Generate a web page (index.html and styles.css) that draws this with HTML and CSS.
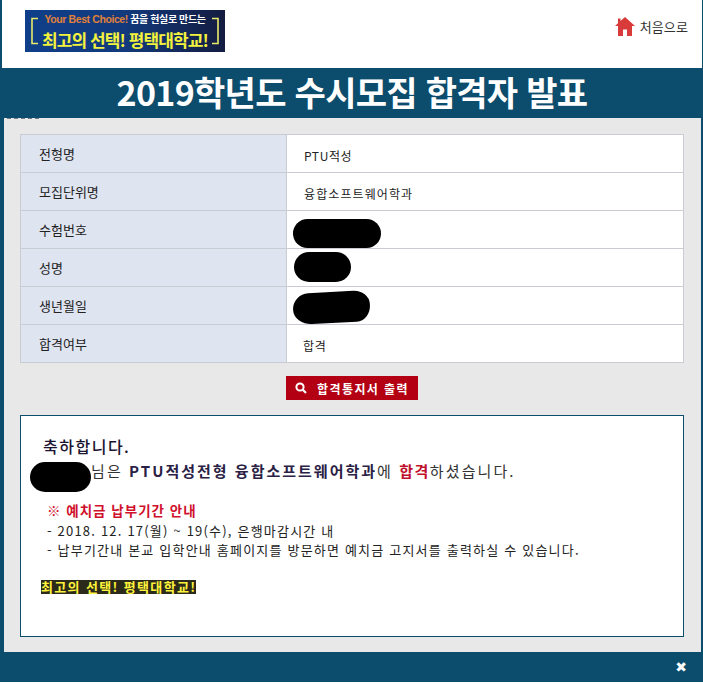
FILE: index.html
```html
<!DOCTYPE html>
<html lang="ko">
<head>
<meta charset="utf-8">
<title>합격자 발표</title>
<link rel="stylesheet" href="styles.css">
</head>
<body>
<div class="frame">
  <header class="top">
    <div class="banner">
      <svg class="bracket" width="9" height="28" viewBox="0 0 9 28"><path d="M8 1.5H2V26.5H8" fill="none" stroke="#e8ea6a" stroke-width="1.6"/></svg>
      <div class="banner-text">
        <div class="banner-small"><span class="orange">Your Best Choice!</span> 꿈을 현실로 만드는</div>
        <div class="banner-big">최고의 선택! 평택대학교!</div>
      </div>
      <svg class="bracket" width="9" height="28" viewBox="0 0 9 28"><path d="M1 1.5H7V26.5H1" fill="none" stroke="#e8ea6a" stroke-width="1.6"/></svg>
    </div>
    <a class="home">
      <svg width="20" height="19" viewBox="0 0 20 19"><path fill="#d93a3a" d="M10 0 20 9H17V19H12V12.500H8V19H3V9H0L3 6.300V1.500H5.500V4Z"/></svg>
      <span>처음으로</span>
    </a>
  </header>
  <h1 class="title">2019학년도 수시모집 합격자 발표</h1>
  <main class="panel">
    <table class="info">
      <tr><th>전형명</th><td class="shift">PTU적성</td></tr>
      <tr><th>모집단위명</th><td class="shift wide">융합소프트웨어학과</td></tr>
      <tr><th>수험번호</th><td><span class="blot blot-a"></span></td></tr>
      <tr><th>성명</th><td><span class="blot blot-b"></span></td></tr>
      <tr><th>생년월일</th><td><span class="blot blot-c"></span></td></tr>
      <tr><th>합격여부</th><td>합격</td></tr>
    </table>
    <div class="actions">
      <a class="print">
        <svg width="12" height="12" viewBox="0 0 12 12"><circle cx="5" cy="5" r="3.600" fill="none" stroke="#fff" stroke-width="2"/><path d="M7.800 7.800 11 11" stroke="#fff" stroke-width="2.200"/></svg>
        <span>합격통지서 출력</span>
      </a>
    </div>
    <section class="notice">
      <p class="congrats">축하합니다.</p>
      <p class="result"><span class="blot blot-d"></span>님은 <b class="navy">PTU적성전형 융합소프트웨어학과</b>에 <b class="red">합격</b>하셨습니다.</p>
      <div class="pay">
        <p class="pay-title">※ 예치금 납부기간 안내</p>
        <p>- 2018. 12. 17(월) ~ 19(수), 은행마감시간 내</p>
        <p>- 납부기간내 본교 입학안내 홈페이지를 방문하면 예치금 고지서를 출력하실 수 있습니다.</p>
      </div>
      <p class="slogan"><mark>최고의 선택! 평택대학교!</mark></p>
    </section>
  </main>
  <footer class="bottom"><span class="close">✖</span></footer>
</div>
</body>
</html>
```
FILE: styles.css
```css
* { box-sizing: border-box; }
html, body { margin: 0; padding: 0; background: #fff; }
body {
  width: 703px;
  height: 684px;
  overflow: hidden;
  font-family: "Noto Sans CJK KR", "Noto Sans", sans-serif;
  color: #222;
}
p { margin: 0; }
.frame {
  width: 703px;
  height: 682px;
  background: #0c4c6c;
  padding: 0 1px 0 2px;
  display: flex;
  flex-direction: column;
}
.top {
  height: 68px;
  background: #fff;
  display: flex;
  align-items: flex-start;
  justify-content: space-between;
  padding: 10px 14px 0 23px;
}
.banner {
  width: 200px;
  height: 42px;
  background: linear-gradient(90deg, #0f3f8a 0%, #123a7c 50%, #141c40 100%);
  display: flex;
  align-items: center;
  justify-content: space-between;
  padding: 0 5px;
  overflow: hidden;
}
.banner-text { text-align: center; white-space: nowrap; }
.banner-small {
  font-size: 10px;
  line-height: 15px;
  font-weight: 700;
  color: #fff;
  letter-spacing: -0.4px;
}
.orange { color: #e0813a; font-family: "Liberation Sans", sans-serif; font-size: 10.500px; }
.banner-big {
  font-size: 17px;
  line-height: 25px;
  font-weight: 700;
  color: #f3f23c;
  letter-spacing: -0.9px;
}
.home {
  display: flex;
  align-items: center;
  gap: 5px;
  margin-top: 7px;
  font-size: 13px;
  line-height: 19px;
  letter-spacing: 0.1px;
  color: #333;
}
.title {
  margin: 0;
  height: 50px;
  text-align: center;
  font-size: 34px;
  line-height: 48px;
  font-weight: 700;
  letter-spacing: -0.7px;
  color: #fff;
}
.panel {
  position: relative;
  height: 534px;
  margin: 0 1px 0 2px;
  background: #e8e8e8;
  padding: 16px 17px 0 16px;
}
.panel::before {
  content: "";
  position: absolute;
  left: 3px;
  top: 0;
  width: 34px;
  height: 1px;
  background: repeating-linear-gradient(90deg, #6d7a84 0 4px, transparent 4px 7px);
}
.info {
  width: 664px;
  border-collapse: collapse;
  table-layout: fixed;
  background: #fff;
}
.info th, .info td {
  height: 38px;
  border: 1px solid #c9ccd2;
  padding: 0;
  font-size: 13px;
  font-weight: 400;
  color: #222;
  text-align: left;
  position: relative;
}
.info th {
  width: 266px;
  background: #dee4f0;
  padding: 0 0 1px 18px;
}
.info td { padding: 3px 0 0 16px; font-size: 12px; letter-spacing: 0.6px; }
.info td.shift { padding-left: 17px; }
.info td.wide { letter-spacing: 1.1px; }
.blot { display: block; background: #000; position: absolute; }
.blot-a { left: 6px; top: 8px; width: 88px; height: 29px; border-radius: 15px; }
.blot-b { left: 7px; top: 3px; width: 57px; height: 30px; border-radius: 15px; }
.blot-c { left: 6px; top: 5px; width: 77px; height: 31px; border-radius: 16px 16px 14px 18px / 16px 14px 16px 15px; transform: rotate(-3deg); }
.blot-d { left: 9px; top: 46px; width: 61px; height: 30px; border-radius: 15px; }
.actions { display: flex; justify-content: center; padding-top: 13px; }
.print {
  width: 132px;
  height: 24px;
  background: #b30012;
  color: #fff;
  display: flex;
  align-items: center;
  justify-content: center;
  gap: 10px;
  font-size: 12px;
  font-weight: 700;
  letter-spacing: 1.4px;
}
.notice {
  position: relative;
  margin-top: 15px;
  width: 664px;
  height: 222px;
  background: #fff;
  border: 1px solid #0c4c6c;
  padding: 18px 0 0 22px;
}
.congrats { font-size: 16px; line-height: 24px; font-weight: 500; letter-spacing: 1.5px; color: #1b1430; }
.result { margin-top: 1px; font-size: 15px; line-height: 24px; letter-spacing: 2.1px; color: #333; padding-left: 48px; white-space: nowrap; }
.navy { color: #2a2145; font-weight: 700; letter-spacing: 2px; }
.red { color: #c0102c; font-weight: 700; letter-spacing: 1.5px; }
.pay { margin-top: 17px; padding-left: 4px; font-size: 13px; line-height: 19px; letter-spacing: 1.2px; color: #222; white-space: nowrap; }
.pay-title { color: #d0102c; font-weight: 700; font-size: 13.500px; line-height: 21px; letter-spacing: 1px; }
.slogan { margin-top: 21px; margin-left: -2px; font-size: 13px; line-height: 14px; font-weight: 700; letter-spacing: 1.35px; }
mark { display: inline-block; background: #2c2a1a; color: #fff23a; }
.bottom {
  flex: 1;
  display: flex;
  align-items: center;
  justify-content: flex-end;
  padding: 0 15px 0 0;
}
.close { color: #fff; font-size: 14px; line-height: 1; font-family: "DejaVu Sans", sans-serif; }
```
